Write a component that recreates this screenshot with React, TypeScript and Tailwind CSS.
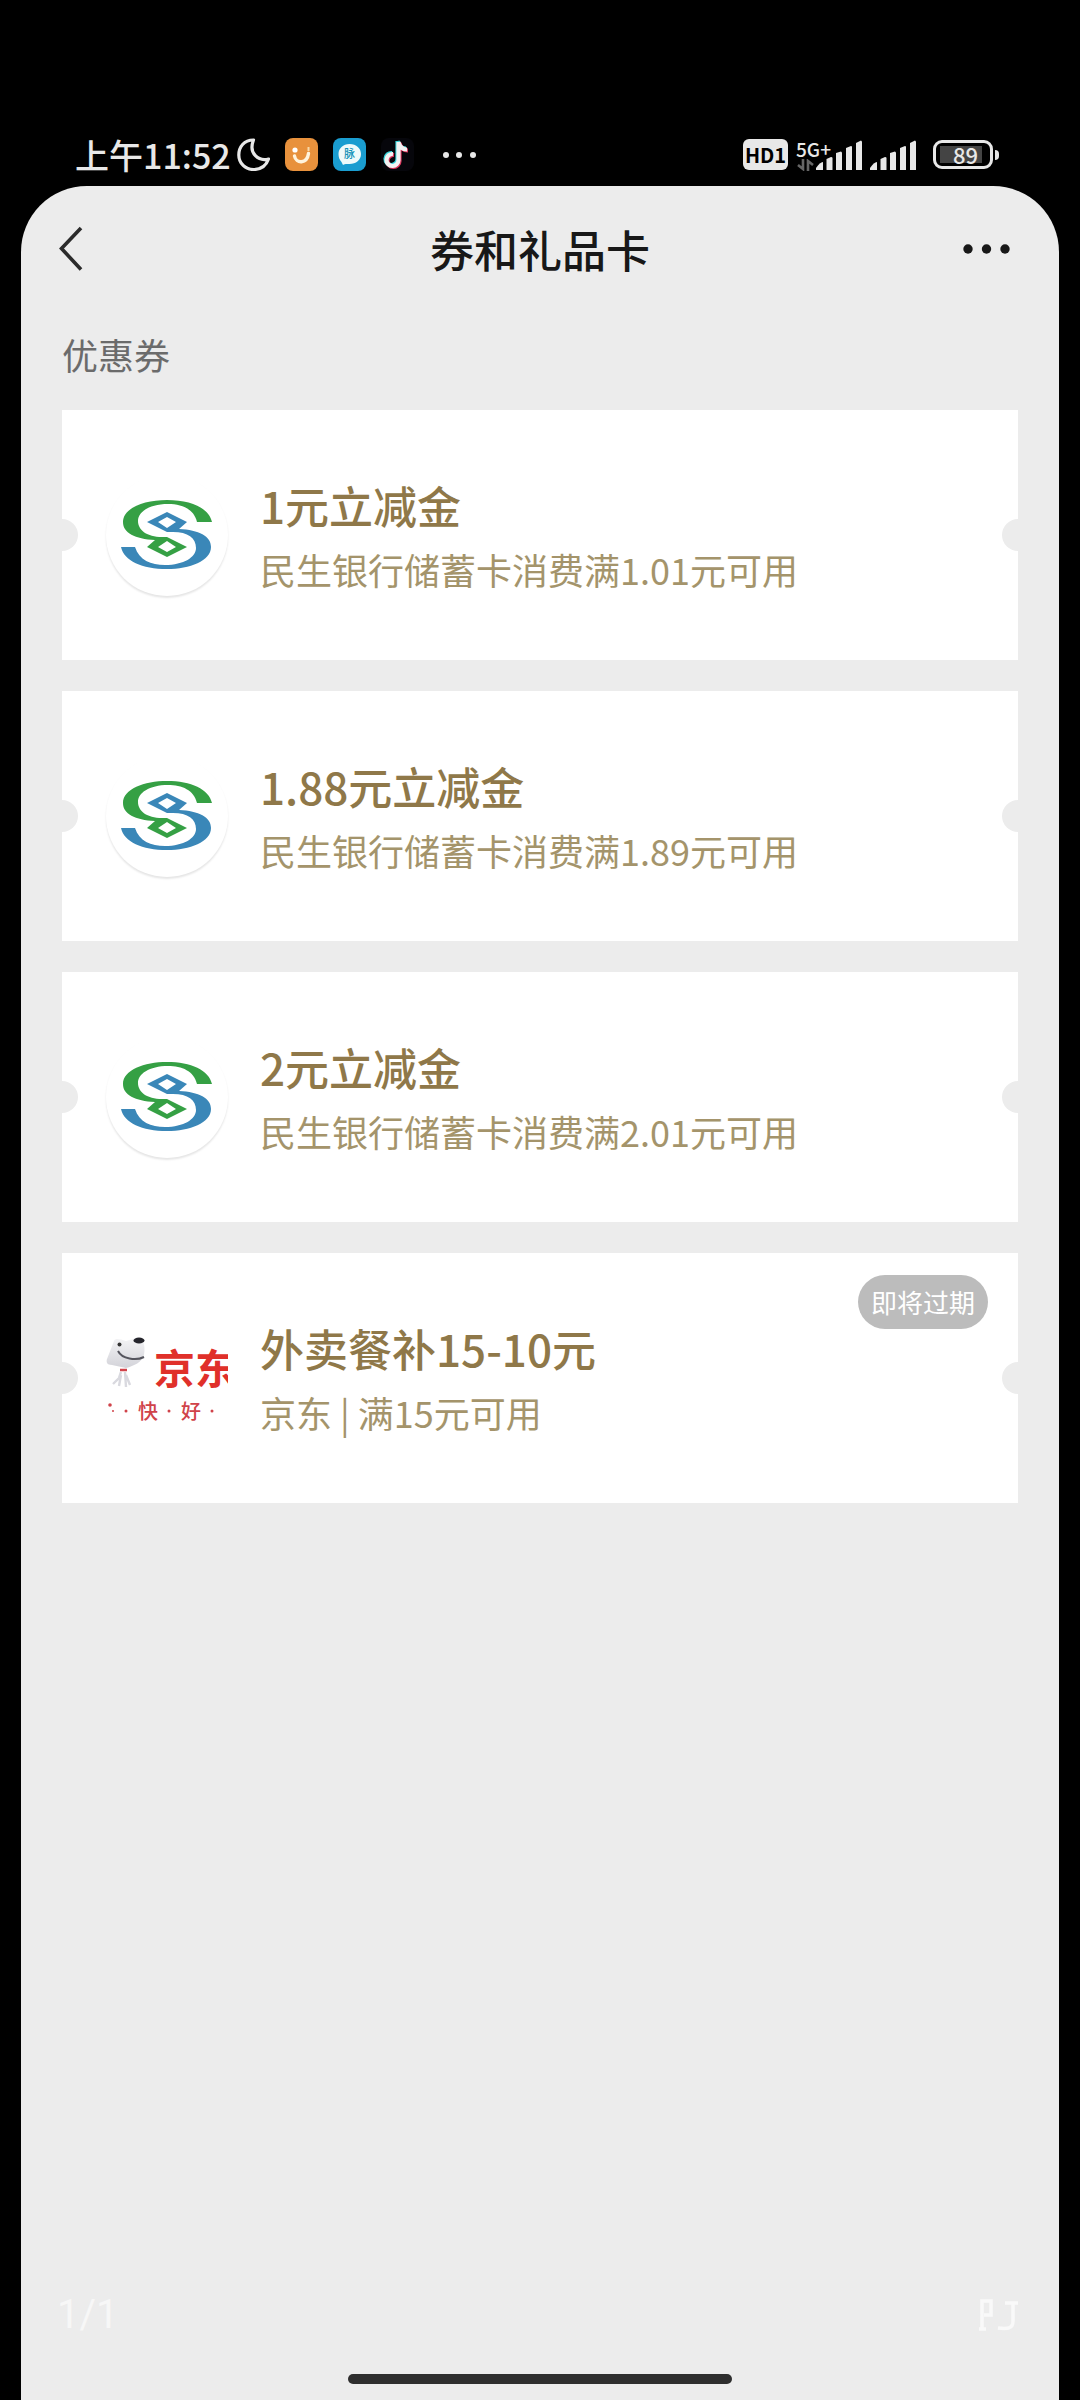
const coupons = [
  { id: 1, brand: "cmbc", title: "1元立减金", desc: "民生银行储蓄卡消费满1.01元可用", expiring: false },
  { id: 2, brand: "cmbc", title: "1.88元立减金", desc: "民生银行储蓄卡消费满1.89元可用", expiring: false },
  { id: 3, brand: "cmbc", title: "2元立减金", desc: "民生银行储蓄卡消费满2.01元可用", expiring: false },
  { id: 4, brand: "jd", title: "外卖餐补15-10元", desc: "京东 | 满15元可用", expiring: true },
];

function Signal() {
  return (
    <svg width="46" height="32" viewBox="0 0 46 32" fill="#e8e8e8">
      <path d="M0 29 Q4 23 7 23 V31 H0Z" />
      <path d="M10.5 20 L15 18 Q16.5 18 16.5 19 V31 H10.5Z" />
      <path d="M20 14 L25 12.500 Q26 13 26 14 V31 H20Z" />
      <path d="M30 9 L35 7 Q36 7 36 8 V31 H30Z" />
      <path d="M40 4 L45 1.500 Q46 2 46 3 V31 H40Z" />
    </svg>
  );
}

function StatusBar() {
  return (
    <div className="flex items-center justify-between pt-[138px] pb-[15px] pl-[75px] pr-[81px] text-[#e8e8e8]">
      <div className="flex h-[33px] items-center gap-[15px]">
        <div className="flex items-center gap-[6px]">
          <span className="text-[34px] leading-[33px] font-medium">上午11:52</span>
          <svg width="33" height="33" viewBox="0 0 33 33" fill="none" stroke="#e8e8e8" strokeWidth="3.2" strokeLinejoin="round">
            <path d="M16.500 2 C7 2 1.800 9 1.800 17 C1.800 25.500 8.500 31.500 16.500 31.500 C23.500 31.500 29 28 31.500 21 C22 23.500 11 16 16.500 2Z" />
          </svg>
        </div>
        <svg width="33" height="33" viewBox="0 0 33 33">
          <rect width="33" height="33" rx="8" fill="#e8913c" />
          <circle cx="10" cy="12" r="2.600" fill="#fff" />
          <path d="M23.500 9 V13" stroke="#f8d9a8" strokeWidth="2" />
          <path d="M9.500 18 C11 26 22 26 23.500 15.500" fill="none" stroke="#fff3dc" strokeWidth="3.400" strokeLinecap="round" />
        </svg>
        <svg width="33" height="33" viewBox="0 0 33 33">
          <rect width="33" height="33" rx="8" fill="#1a9dd0" />
          <path d="M16.500 6 C23.500 6 28 10.500 28 16 C28 22 23 26 16.500 26 C14 26 12 25.500 10 27 L8.500 24 C6.500 22 5.500 19 5.500 16 C5.500 10.500 10 6 16.500 6Z" fill="#effafa" />
          <text x="16.500" y="20" textAnchor="middle" fontSize="11" fontWeight="500" fill="#1593b8">脉</text>
        </svg>
        <svg width="33" height="33" viewBox="0 0 33 33" fill="none" strokeWidth="4.200">
          <rect width="33" height="33" rx="8" fill="#06060b" />
          <path d="M17.500 4 V22 A6 6 0 1 1 12 16 M17.500 4 C18.500 9 21 11.500 26 11.500" stroke="#38d5dc" transform="translate(-1 -1)" />
          <path d="M17.500 4 V22 A6 6 0 1 1 12 16 M17.500 4 C18.500 9 21 11.500 26 11.500" stroke="#e0385f" transform="translate(1 1)" />
          <path d="M17.500 4 V22 A6 6 0 1 1 12 16 M17.500 4 C18.500 9 21 11.500 26 11.500" stroke="#f2f2f2" />
        </svg>
        <svg width="60" height="8" viewBox="0 0 60 8" fill="#e8e8e8">
          <circle cx="17" cy="4" r="3" />
          <circle cx="30" cy="4" r="3" />
          <circle cx="44" cy="4" r="3" />
        </svg>
      </div>

      <div className="flex h-[33px] items-center gap-2">
        <span className="flex h-[31px] w-[45px] items-center justify-center rounded-md bg-[#e8e8e8] text-[20px] font-bold text-black">
          HD1
        </span>
        <div className="flex items-end">
          <div className="flex w-5 flex-col">
            <span className="text-[19px] leading-5 font-medium">5G+</span>
            <svg width="18" height="12" viewBox="0 0 18 12" fill="none" stroke="#666" strokeWidth="2.600">
              <path d="M7 0 V10 L2 6 M12 12 V2 L17 6" />
            </svg>
          </div>
          <Signal />
        </div>
        <Signal />
        <div className="ml-[9px] flex items-center gap-[2px]">
          <div className="flex h-[29px] w-[60px] items-center rounded-[9px] border-[3px] border-[#e8e8e8] pl-1">
            <span className="flex h-[17px] w-[42px] items-center justify-end bg-[#444] pr-1 text-[22px] font-medium">89</span>
          </div>
          <span className="h-[10px] w-1 rounded-r-sm bg-[#e8e8e8]" />
        </div>
      </div>
    </div>
  );
}

function CmbcLogo() {
  return (
    <div className="flex size-[122px] shrink-0 items-center justify-center rounded-full bg-white shadow-[0_2px_2px_rgba(0,0,0,0.1)]">
      <svg width="92" height="70" viewBox="0 0 92 70" role="img" aria-label="民生银行">
        <path d="M91 22 H76 C73 9 61 4 47 4 C28 4 17 12 17 21 C17 30 26 37 41 37 L46 37 L66 47 L46 57 L26 47 L34 40 C14 39 2 33 2 22 C2 8 23 0 46 0 C70 0 88 8 91 22Z M46 41 L37 47 L46 52 L55 47Z" fill="#35a044" fillRule="evenodd" />
        <path d="M0 47 H14 C18 60 30 65 44 65 C63 65 75 57 75 48 C75 38 67 32 52 32 L46 32 L26 22 L46 12 L66 22 L58 29 C78 30 90 36 90 47 C90 61 69 69 46 69 C21 69 3 61 0 47Z M46 17 L37 22 L46 28 L55 22Z" fill="#3a87b8" fillRule="evenodd" />
      </svg>
    </div>
  );
}

function JdLogo() {
  return (
    <svg className="size-[122px] shrink-0 overflow-hidden" viewBox="0 0 122 122" role="img" aria-label="京东">
      <defs>
        <linearGradient id="joy" x1="0" y1="0" x2="0" y2="1">
          <stop offset="0" stopColor="#f4f4f6" />
          <stop offset="1" stopColor="#d3d3d9" />
        </linearGradient>
      </defs>
      <path d="M8 24 C9 21 14 22 20 24 L30 21 C36 20 40 26 38 38 C36 45 28 49 20 51 L6 48 C1 48 0 45 1 42Z" fill="url(#joy)" />
      <ellipse cx="33" cy="23.500" rx="5.500" ry="3" fill="#25252c" />
      <circle cx="13.500" cy="27.500" r="2" fill="#333" />
      <path d="M12 34 C16 42 30 44 38 40" fill="none" stroke="#55555e" strokeWidth="2" />
      <path d="M14 53 H21" stroke="#d0434a" strokeWidth="2.500" />
      <path d="M15 55 L13 61 L7 67 M15 58 L13 69 M19 55 L20 70 M20 58 L24 68" fill="none" stroke="#d9d9df" strokeWidth="2.400" />
      <text x="48" y="67" fontSize="41" fontWeight="700" fill="#e0302a">京东</text>
      <text x="32" y="102" fontSize="20" fontWeight="500" fill="#d0434a">快</text>
      <text x="75" y="102" fontSize="20" fontWeight="500" fill="#d0434a">好</text>
      <g fill="#d0434a">
        <circle cx="4" cy="88" r="1.800" />
        <circle cx="7" cy="94" r="1" />
        <circle cx="20" cy="94" r="1.500" />
        <circle cx="63" cy="94" r="1.500" />
        <circle cx="106" cy="94" r="1.500" />
      </g>
    </svg>
  );
}

export default function App() {
  return (
    <div className="flex min-h-screen flex-col bg-black font-['Noto_Sans_CJK_SC',sans-serif]">
      <StatusBar />

      <main className="mx-[21px] flex flex-1 flex-col rounded-t-[66px] bg-[#ececec]">
        {/* Nav */}
        <header className="flex h-[126px] items-center justify-between px-[38px]">
          <button aria-label="返回" className="w-[60px]">
            <svg width="24" height="46" viewBox="0 0 24 46" fill="none" stroke="#2b2b2b" strokeWidth="3.600">
              <path d="M22 2 L2.500 22.500 L22 43.500" />
            </svg>
          </button>
          <h1 className="text-[44px] leading-[60px] font-medium text-[#181818]">券和礼品卡</h1>
          <button aria-label="更多" className="w-[60px]">
            <svg width="60" height="10" viewBox="0 0 60 10" fill="#181818">
              <circle cx="7" cy="5" r="4.700" />
              <circle cx="25.500" cy="5" r="4.700" />
              <circle cx="44" cy="5" r="4.700" />
            </svg>
          </button>
        </header>

        {/* Coupons */}
        <section className="px-[41px]">
          <h2 className="pt-4 pb-[30px] text-[36px] leading-[52px] text-[#6b6b6b]">优惠券</h2>
          <ul className="flex flex-col gap-[31px]">
            {coupons.map((coupon) => (
              <li key={coupon.id} className="relative overflow-hidden bg-white">
                <a href="#" className="flex h-[250px] items-center gap-8 px-11">
                  {coupon.brand === "jd" ? <JdLogo /> : <CmbcLogo />}
                  <div>
                    <h3 className="text-[44px] leading-[68px] font-medium text-[#8f7849]">{coupon.title}</h3>
                    <p className="text-[36px] leading-[60px] text-[#a4946b]">{coupon.desc}</p>
                  </div>
                </a>
                <span className="absolute top-1/2 left-0 size-8 -translate-1/2 rounded-full bg-[#ececec]" />
                <span className="absolute top-1/2 right-0 size-8 translate-x-1/2 -translate-y-1/2 rounded-full bg-[#ececec]" />
                {coupon.expiring && (
                  <span className="absolute top-[22px] right-[30px] rounded-full bg-[#bcbcbc] px-[13px] text-[26px] leading-[54px] text-white">
                    即将过期
                  </span>
                )}
              </li>
            ))}
          </ul>
        </section>

        {/* Footer */}
        <footer className="mt-auto flex flex-col items-center">
          <div className="flex w-full items-center justify-between px-9 pb-8 text-[#f7f7f7]">
            <span className="font-[Roboto,sans-serif] text-[40px] leading-[54px]">1/1</span>
            <svg width="46" height="34" viewBox="0 0 46 34" fill="none" stroke="#f9f9f9" strokeWidth="3.500">
              <path d="M5 32 V3 H14 V17 H7 M2 31 H9 M28 5 H41 M36 5 V23 C36 31 30 31 21 30" />
            </svg>
          </div>
          <div className="mb-4 h-[10px] w-[384px] rounded-full bg-[#2e2e2e]" />
        </footer>
      </main>
    </div>
  );
}
